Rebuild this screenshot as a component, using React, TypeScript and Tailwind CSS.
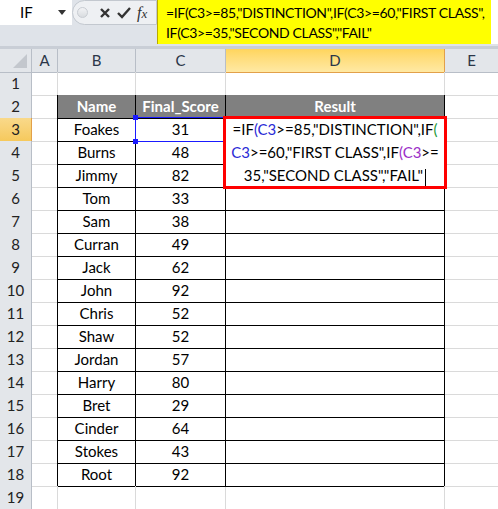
import React from 'react';

const rows: [string, number][] = [
  ['Foakes', 31],
  ['Burns', 48],
  ['Jimmy', 82],
  ['Tom', 33],
  ['Sam', 38],
  ['Curran', 49],
  ['Jack', 62],
  ['John', 92],
  ['Chris', 52],
  ['Shaw', 52],
  ['Jordan', 57],
  ['Harry', 80],
  ['Bret', 29],
  ['Cinder', 64],
  ['Stokes', 43],
  ['Root', 92],
];

const cols = 'grid grid-cols-[32px_26px_78px_90px_219px_1fr]';

function RowHeader({ n, active }: { n: number; active?: boolean }) {
  return (
    <div
      className={
        active
          ? 'flex items-center justify-center border-r border-b border-[#e2a04a] bg-gradient-to-b from-[#f9d98a] to-[#f6c95c] text-[#222]'
          : 'flex items-center justify-center border-r border-b border-[#b8bec7] bg-[#e3e6ea] text-[#222]'
      }
    >
      {n}
    </div>
  );
}

function Formula() {
  return (
    <>
      <div>
        =IF<span className="text-[#2b2bd6]">(C3</span>&gt;=85,"DISTINCTION",IF<span className="text-[#1f9a3a]">(</span>
      </div>
      <div>
        <span className="text-[#2b2bd6]">C3</span>&gt;=60,"FIRST CLASS",IF<span className="text-[#9b30c8]">(C3</span>&gt;=
      </div>
      <div>
        35,"SECOND CLASS","FAIL"<span className="ml-[2px] inline-block h-[17px] w-px bg-black align-middle" />
      </div>
    </>
  );
}

export default function App() {
  return (
    <div className="relative h-[509px] w-[498px] overflow-hidden bg-white font-['Lato',sans-serif] text-[15px] text-black">
      {/* formula bar */}
      <div className="flex h-[49px] border-b-[3px] border-[#c9ced6] bg-[#dfe3e9]">
        <div className="flex w-[157px] flex-col">
          <div className="flex h-[25px]">
            <div className="flex w-[72px] items-center justify-between bg-white pl-[20px] pr-[6px] text-[15px]">
              <span>IF</span>
              <svg width="8" height="5" viewBox="0 0 8 5">
                <path d="M0 0h8L4 5z" fill="#333" />
              </svg>
            </div>
            <div className="flex flex-1 items-center rounded-l-full border border-[#c3c8cf] bg-[#eef0f3] pl-[4px]">
              <div className="h-[11px] w-[11px] rounded-full border border-[#c8ccd2] bg-gradient-to-b from-[#f2f3f5] to-[#d9dce0]" />
              <svg width="14" height="14" viewBox="0 0 14 14" className="ml-[10px]">
                <path d="M3 3l8 8M11 3l-8 8" stroke="#333" strokeWidth="2.4" />
              </svg>
              <svg width="16" height="14" viewBox="0 0 16 14" className="ml-[4px]">
                <path d="M2 7l4 4 8-9" stroke="#333" strokeWidth="2.4" fill="none" />
              </svg>
              <span className="ml-[5px] font-['Liberation_Serif',serif] text-[16px] italic text-[#333]">
                f<span className="text-[13px]">x</span>
              </span>
            </div>
          </div>
        </div>
        <div className="h-[44px] w-[334px] whitespace-nowrap border-l border-[#b9a900] bg-[#ffff00] pl-[8px] pt-[3px] text-[14px] leading-[20px] tracking-[-0.35px]">
          <div>=IF(C3&gt;=85,"DISTINCTION",IF(C3&gt;=60,"FIRST CLASS",</div>
          <div>IF(C3&gt;=35,"SECOND CLASS","FAIL"</div>
        </div>
        <div className="h-[44px] flex-1 bg-white" />
      </div>

      {/* column headers */}
      <div className={`${cols} h-[23px] text-[#2b3648]`}>
        <div className="relative border-r border-b border-[#b8bec7] bg-[#e3e6ea]">
          <svg width="14" height="14" viewBox="0 0 14 14" className="absolute right-[4px] bottom-[4px]">
            <path d="M14 0v14H0z" fill="#c3c7cd" />
          </svg>
        </div>
        <div className="flex items-center justify-center border-r border-b border-[#b8bec7] bg-[#e3e6ea]">A</div>
        <div className="flex items-center justify-center border-r border-b border-[#b8bec7] bg-[#e3e6ea]">B</div>
        <div className="flex items-center justify-center border-r border-b border-[#b8bec7] bg-[#e3e6ea]">C</div>
        <div className="flex items-center justify-center border-r border-b border-[#e2a04a] bg-gradient-to-b from-[#ffd55c] to-[#ffe9a3]">D</div>
        <div className="flex items-center justify-center border-b border-[#b8bec7] bg-[#e3e6ea]">E</div>
      </div>

      {/* row 1 */}
      <div className={`${cols} h-[23px]`}>
        <RowHeader n={1} />
        <div className="border-r border-b border-[#dadada]" />
        <div className="border-r border-b border-[#dadada] border-b-black" />
        <div className="border-r border-b border-[#dadada] border-b-black" />
        <div className="border-r border-b border-[#dadada] border-b-black" />
        <div className="border-b border-[#dadada]" />
      </div>

      {/* row 2: table header */}
      <div className={`${cols} h-[23px]`}>
        <RowHeader n={2} />
        <div className="border-r border-b border-[#dadada] border-r-black" />
        <div className="flex items-center justify-center border-r border-b border-black bg-[#808080] font-bold text-white">Name</div>
        <div className="flex items-center justify-center border-r border-b border-black bg-[#808080] font-bold text-white">Final_Score</div>
        <div className="flex items-center justify-center border-r border-b border-black bg-[#808080] font-bold text-white">Result</div>
        <div className="border-b border-[#dadada]" />
      </div>

      {rows.map(([name, score], i) => (
        <div key={name + i} className={`${cols} h-[23px]`}>
          <RowHeader n={i + 3} active={i === 0} />
          <div className="border-r border-b border-[#dadada] border-r-black" />
          <div className="flex items-center justify-center border-r border-b border-black">{name}</div>
          <div className="relative flex items-center justify-center border-r border-b border-black">
            {score}
            {i === 0 && (
              <div className="absolute z-10 -top-px -left-px -right-[3px] -bottom-px border-[1.5px] border-[#1a1aff]">
                <div className="absolute -top-[3px] -left-[3px] h-[5px] w-[5px] bg-[#1a1aff]" />
                <div className="absolute -bottom-[3px] -left-[3px] h-[5px] w-[5px] bg-[#1a1aff]" />
              </div>
            )}
          </div>
          <div className="border-r border-b border-black" />
          <div className="border-b border-[#dadada]" />
        </div>
      ))}

      {/* row 19 */}
      <div className={`${cols} h-[23px]`}>
        <RowHeader n={19} />
        <div className="border-r border-b border-[#dadada]" />
        <div className="border-r border-b border-[#dadada]" />
        <div className="border-r border-b border-[#dadada]" />
        <div className="border-r border-b border-[#dadada]" />
        <div className="border-b border-[#dadada]" />
      </div>

      {/* in-cell edit box */}
      <div className="absolute z-20 top-[116px] left-[223px] flex h-[73px] w-[224px] flex-col items-center justify-center border-[3px] border-[#ff0000] bg-white text-[15px] leading-[23px]">
        <Formula />
      </div>
    </div>
  );
}
